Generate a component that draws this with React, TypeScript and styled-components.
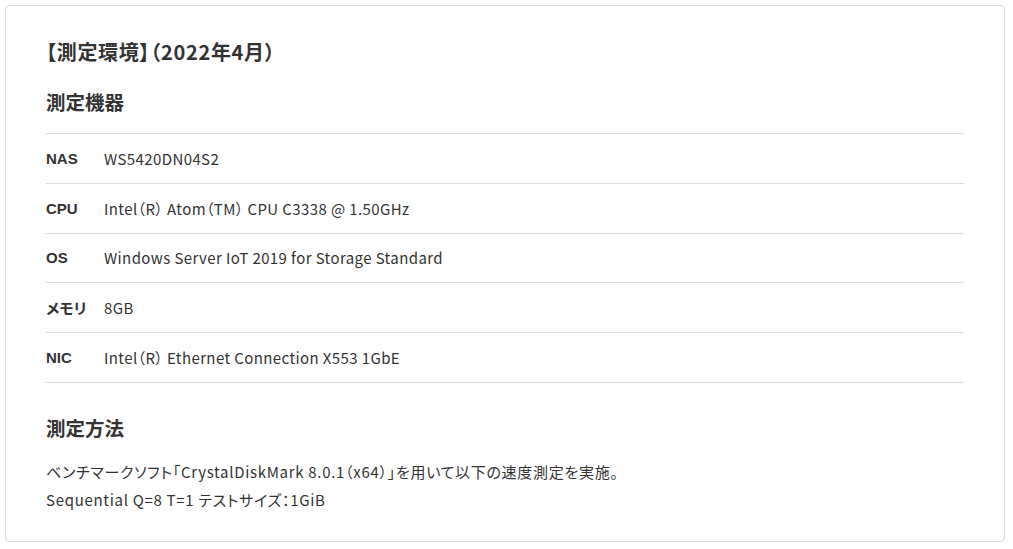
import React from "react";
import styled, { createGlobalStyle } from "styled-components";

const GlobalStyle = createGlobalStyle`
    body {
        margin: 0;
        background: #fff;
        font-family: "Noto Sans CJK JP", "Noto Sans", sans-serif;
        font-feature-settings: "palt";
        color: #333;
    }
`;

const Card = styled.section`
    box-sizing: border-box;
    width: 1000px;
    margin: 5px;
    padding: 31px 40px 27px;
    border: 1px solid #ddd;
    border-radius: 4px;
    background: #fff;
`;

const Title = styled.h2`
    margin: 0;
    font-size: 20px;
    line-height: 30px;
    font-weight: 700;
    letter-spacing: 0.7px;
`;

const Heading = styled.h3<{ gapTop: number }>`
    margin: ${(props): string => `${props.gapTop}px 0 0`};
    font-size: 19.5px;
    line-height: 26px;
    font-weight: 700;
`;

const SpecTable = styled.dl`
    margin: 18px 0 0;
    border-top: 1px solid #ddd;
`;

const SpecRow = styled.div`
    display: flex;
    align-items: center;
    height: 48.8px;
    border-bottom: 1px solid #ddd;
    font-size: 15px;
`;

const SpecLabel = styled.dt`
    width: 58px;
    flex-shrink: 0;
    font-family: "Liberation Sans", "Noto Sans CJK JP", sans-serif;
    font-weight: 700;
`;

const SpecValue = styled.dd`
    margin: 0;
    letter-spacing: 0.4px;
`;

const Paragraph = styled.p`
    margin: 17px 0 0;
    font-size: 15px;
    line-height: 28px;
    letter-spacing: 0.7px;
`;

const specs = [
    { label: "NAS", value: "WS5420DN04S2" },
    { label: "CPU", value: "Intel（R） Atom（TM） CPU C3338 @ 1.50GHz" },
    { label: "OS", value: "Windows Server IoT 2019 for Storage Standard" },
    { label: "メモリ", value: "8GB" },
    { label: "NIC", value: "Intel（R） Ethernet Connection X553 1GbE" }
];

const App: React.FC = (): React.ReactElement => (
    <>
        <GlobalStyle />
        <Card>
            <Title>【測定環境】（2022年4月）</Title>
            <Heading gapTop={22}>測定機器</Heading>
            <SpecTable>
                {specs.map((spec) => (
                    <SpecRow key={spec.label}>
                        <SpecLabel>{spec.label}</SpecLabel>
                        <SpecValue>{spec.value}</SpecValue>
                    </SpecRow>
                ))}
            </SpecTable>
            <Heading gapTop={32}>測定方法</Heading>
            <Paragraph>
                ベンチマークソフト「CrystalDiskMark 8.0.1（x64）」を用いて以下の速度測定を実施。
                <br />
                Sequential Q=8 T=1 テストサイズ：1GiB
            </Paragraph>
        </Card>
    </>
);

export default App;
